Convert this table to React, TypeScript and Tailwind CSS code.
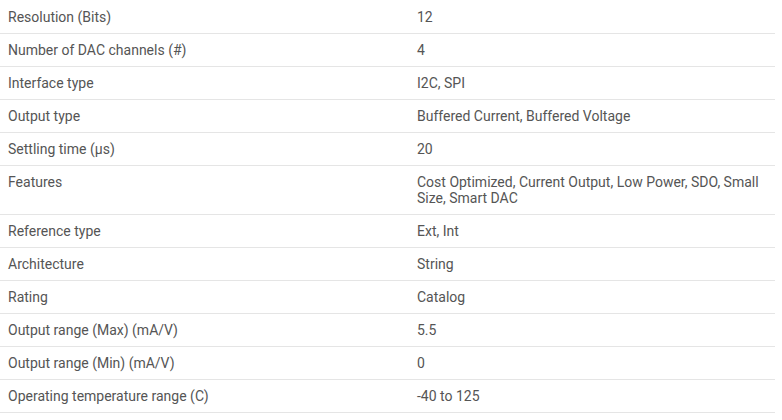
const rows: [string, string][] = [
  ["Resolution (Bits)", "12"],
  ["Number of DAC channels (#)", "4"],
  ["Interface type", "I2C, SPI"],
  ["Output type", "Buffered Current, Buffered Voltage"],
  ["Settling time (µs)", "20"],
  ["Features", "Cost Optimized, Current Output, Low Power, SDO, Small Size, Smart DAC"],
  ["Reference type", "Ext, Int"],
  ["Architecture", "String"],
  ["Rating", "Catalog"],
  ["Output range (Max) (mA/V)", "5.5"],
  ["Output range (Min) (mA/V)", "0"],
  ["Operating temperature range (C)", "-40 to 125"],
];

export default function App() {
  return (
    <div className="bg-white w-[782px] h-[420px] overflow-hidden pt-px font-['Roboto',sans-serif] text-[14px] leading-4 text-[#555555]">
      <table className="w-[775px] border-collapse">
        <tbody>
          {rows.map(([label, value]) => (
            <tr key={label} className="border-b border-[#e5e5e5] align-top">
              <td className="w-[409px] pl-2 pr-2 py-2">{label}</td>
              <td className="pl-2 pr-4 py-2">{value}</td>
            </tr>
          ))}
        </tbody>
      </table>
    </div>
  );
}
